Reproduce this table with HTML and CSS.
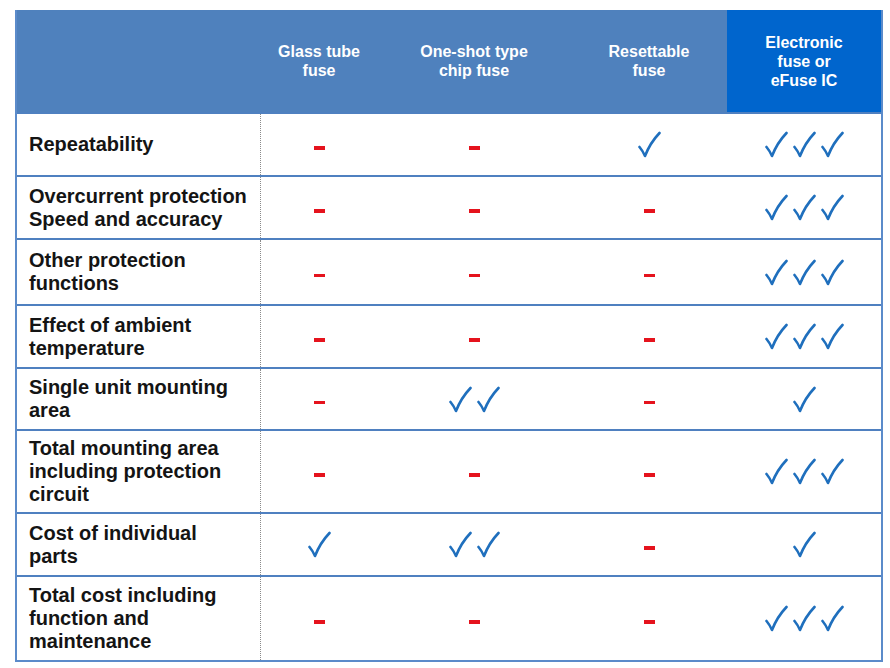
FILE: index.html
```html
<!DOCTYPE html>
<html lang="en">
<head>
<meta charset="utf-8">
<title>Fuse comparison</title>
<link rel="stylesheet" href="styles.css">
</head>
<body>
<div class="table">
  <div class="row head">
    <div class="hcell"></div>
    <div class="hcell">Glass tube<br>fuse</div>
    <div class="hcell">One-shot type<br>chip fuse</div>
    <div class="hcell">Resettable<br>fuse</div>
    <div class="hcell efuse">Electronic<br>fuse or<br>eFuse IC</div>
  </div>

  <div class="row">
    <div class="label">Repeatability</div>
    <div class="cell"><span class="dash"></span></div>
    <div class="cell"><span class="dash"></span></div>
    <div class="cell"><svg class="chk" viewBox="0 0 24 27"><path d="M2.5 16 Q5.5 19.5 8 25 Q13 12 22.5 2"/></svg></div>
    <div class="cell"><svg class="chk" viewBox="0 0 24 27"><path d="M2.5 16 Q5.5 19.5 8 25 Q13 12 22.5 2"/></svg><svg class="chk" viewBox="0 0 24 27"><path d="M2.5 16 Q5.5 19.5 8 25 Q13 12 22.5 2"/></svg><svg class="chk" viewBox="0 0 24 27"><path d="M2.5 16 Q5.5 19.5 8 25 Q13 12 22.5 2"/></svg></div>
  </div>

  <div class="row">
    <div class="label">Overcurrent protection<br>Speed and accuracy</div>
    <div class="cell"><span class="dash"></span></div>
    <div class="cell"><span class="dash"></span></div>
    <div class="cell"><span class="dash"></span></div>
    <div class="cell"><svg class="chk" viewBox="0 0 24 27"><path d="M2.5 16 Q5.5 19.5 8 25 Q13 12 22.5 2"/></svg><svg class="chk" viewBox="0 0 24 27"><path d="M2.5 16 Q5.5 19.5 8 25 Q13 12 22.5 2"/></svg><svg class="chk" viewBox="0 0 24 27"><path d="M2.5 16 Q5.5 19.5 8 25 Q13 12 22.5 2"/></svg></div>
  </div>

  <div class="row tall1">
    <div class="label">Other protection<br>functions</div>
    <div class="cell"><span class="dash"></span></div>
    <div class="cell"><span class="dash"></span></div>
    <div class="cell"><span class="dash"></span></div>
    <div class="cell"><svg class="chk" viewBox="0 0 24 27"><path d="M2.5 16 Q5.5 19.5 8 25 Q13 12 22.5 2"/></svg><svg class="chk" viewBox="0 0 24 27"><path d="M2.5 16 Q5.5 19.5 8 25 Q13 12 22.5 2"/></svg><svg class="chk" viewBox="0 0 24 27"><path d="M2.5 16 Q5.5 19.5 8 25 Q13 12 22.5 2"/></svg></div>
  </div>

  <div class="row">
    <div class="label">Effect of ambient<br>temperature</div>
    <div class="cell"><span class="dash"></span></div>
    <div class="cell"><span class="dash"></span></div>
    <div class="cell"><span class="dash"></span></div>
    <div class="cell"><svg class="chk" viewBox="0 0 24 27"><path d="M2.5 16 Q5.5 19.5 8 25 Q13 12 22.5 2"/></svg><svg class="chk" viewBox="0 0 24 27"><path d="M2.5 16 Q5.5 19.5 8 25 Q13 12 22.5 2"/></svg><svg class="chk" viewBox="0 0 24 27"><path d="M2.5 16 Q5.5 19.5 8 25 Q13 12 22.5 2"/></svg></div>
  </div>

  <div class="row short">
    <div class="label">Single unit mounting<br>area</div>
    <div class="cell"><span class="dash"></span></div>
    <div class="cell"><svg class="chk" viewBox="0 0 24 27"><path d="M2.5 16 Q5.5 19.5 8 25 Q13 12 22.5 2"/></svg><svg class="chk" viewBox="0 0 24 27"><path d="M2.5 16 Q5.5 19.5 8 25 Q13 12 22.5 2"/></svg></div>
    <div class="cell"><span class="dash"></span></div>
    <div class="cell"><svg class="chk" viewBox="0 0 24 27"><path d="M2.5 16 Q5.5 19.5 8 25 Q13 12 22.5 2"/></svg></div>
  </div>

  <div class="row">
    <div class="label">Total mounting area<br>including protection<br>circuit</div>
    <div class="cell"><span class="dash"></span></div>
    <div class="cell"><span class="dash"></span></div>
    <div class="cell"><span class="dash"></span></div>
    <div class="cell"><svg class="chk" viewBox="0 0 24 27"><path d="M2.5 16 Q5.5 19.5 8 25 Q13 12 22.5 2"/></svg><svg class="chk" viewBox="0 0 24 27"><path d="M2.5 16 Q5.5 19.5 8 25 Q13 12 22.5 2"/></svg><svg class="chk" viewBox="0 0 24 27"><path d="M2.5 16 Q5.5 19.5 8 25 Q13 12 22.5 2"/></svg></div>
  </div>

  <div class="row">
    <div class="label">Cost of individual<br>parts</div>
    <div class="cell"><svg class="chk" viewBox="0 0 24 27"><path d="M2.5 16 Q5.5 19.5 8 25 Q13 12 22.5 2"/></svg></div>
    <div class="cell"><svg class="chk" viewBox="0 0 24 27"><path d="M2.5 16 Q5.5 19.5 8 25 Q13 12 22.5 2"/></svg><svg class="chk" viewBox="0 0 24 27"><path d="M2.5 16 Q5.5 19.5 8 25 Q13 12 22.5 2"/></svg></div>
    <div class="cell"><span class="dash"></span></div>
    <div class="cell"><svg class="chk" viewBox="0 0 24 27"><path d="M2.5 16 Q5.5 19.5 8 25 Q13 12 22.5 2"/></svg></div>
  </div>

  <div class="row last">
    <div class="label">Total cost including<br>function and<br>maintenance</div>
    <div class="cell"><span class="dash"></span></div>
    <div class="cell"><span class="dash"></span></div>
    <div class="cell"><span class="dash"></span></div>
    <div class="cell"><svg class="chk" viewBox="0 0 24 27"><path d="M2.5 16 Q5.5 19.5 8 25 Q13 12 22.5 2"/></svg><svg class="chk" viewBox="0 0 24 27"><path d="M2.5 16 Q5.5 19.5 8 25 Q13 12 22.5 2"/></svg><svg class="chk" viewBox="0 0 24 27"><path d="M2.5 16 Q5.5 19.5 8 25 Q13 12 22.5 2"/></svg></div>
  </div>
</div>
</body>
</html>
```

FILE: styles.css
```css
html, body {
  margin: 0;
  padding: 0;
  background: #ffffff;
}

body {
  font-family: "Liberation Sans", Arial, sans-serif;
  padding: 10px 0 0 15px;
}

.table {
  width: 868px;
  box-sizing: border-box;
  border: 2px solid #5b8bca;
  border-top: 0;
  display: flex;
  flex-direction: column;
}

.row {
  display: grid;
  grid-template-columns: 244px 116px 194px 156px 154px;
  border-top: 2px solid #4f80c0;
  min-height: 61px;
}

.row.tall1 {
  min-height: 64px;
}

.row.short {
  min-height: 60px;
}

.row.last .label {
  padding-top: 7px;
  padding-bottom: 7px;
}

.row.head {
  border-top: 0;
  height: 102px;
  background: #4f81bd;
}

.hcell {
  display: flex;
  align-items: center;
  justify-content: center;
  text-align: center;
  color: #ffffff;
  font-weight: bold;
  font-size: 16px;
  line-height: 19px;
}

.hcell.efuse {
  background: #0065cd;
}

.label {
  box-sizing: border-box;
  border-right: 1px dotted #8a8a8a;
  padding: 6px 0 6px 12px;
  display: flex;
  align-items: center;
  font-weight: bold;
  font-size: 20px;
  line-height: 23px;
  color: #141414;
}

.cell {
  display: flex;
  align-items: center;
  justify-content: center;
  gap: 4px;
}

.dash {
  display: block;
  width: 11px;
  height: 3.5px;
  background: #e5131d;
  margin-top: 7px;
}

.chk {
  width: 24px;
  height: 27px;
  display: block;
}

.chk path {
  fill: none;
  stroke: #1f6fbd;
  stroke-width: 2.6;
  stroke-linecap: round;
  stroke-linejoin: round;
}
```
